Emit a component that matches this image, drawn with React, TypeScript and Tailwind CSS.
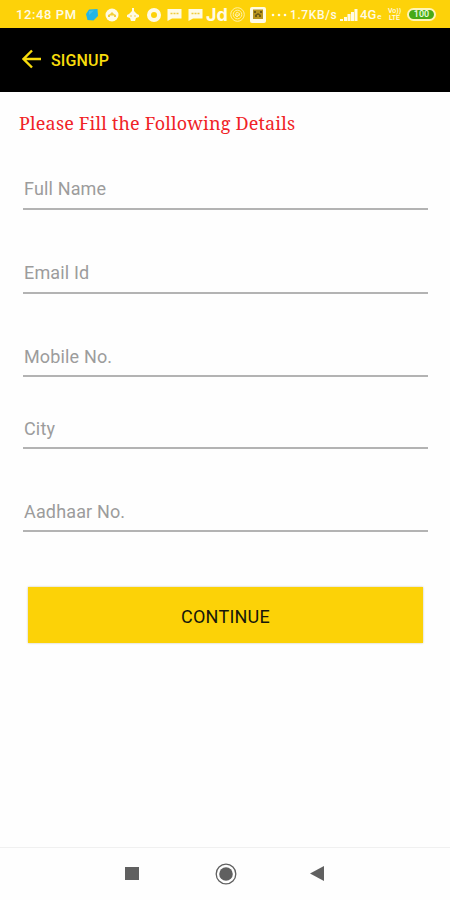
const fields = [
  { label: "Full Name", height: "h-[68px]", padding: "pb-px" },
  { label: "Email Id", height: "h-[84px]", padding: "pb-px" },
  { label: "Mobile No.", height: "h-[83px]", padding: "pt-px" },
  { label: "City", height: "h-[72px]", padding: "pt-px" },
  { label: "Aadhaar No.", height: "h-[83px]", padding: "pt-px" },
];

function ChatIcon() {
  return (
    <svg className="w-[15px] h-[13px] shrink-0" viewBox="0 0 15 13">
      <path d="M.5 1h14v9.500H5L.5 13z" fill="#fffbe5" />
      <path d="M3.500 5.500h8" stroke="#efcb3c" strokeWidth="1.4" strokeDasharray="2 1" />
    </svg>
  );
}

function StatusBar() {
  return (
    <div className="flex items-center h-7 pl-4 pt-px bg-[#fdd209] text-[#fffbe5] font-medium whitespace-nowrap">
      <span className="w-[69px] shrink-0 text-[13px] tracking-[0.6px]">12:48 PM</span>
      <svg className="w-[14px] h-[14px] shrink-0" viewBox="0 0 14 14">
        <path d="M4 1.500 12.500 1l.5 7-4.500 4.500-6-.5L1 6z" fill="#24b5e8" />
        <path d="M4 3 9 2.500 4 7z" fill="#42c2ec" />
      </svg>
      <svg className="w-[14px] h-[14px] ml-[6px] shrink-0" viewBox="0 0 14 14">
        <circle cx="7" cy="7" r="6.5" fill="#fffbe5" />
        <path d="M3 9V7l2-1 2-2 2 2 2 1v2z" fill="#f3cf3b" />
        <path d="M5 9V8l1-1 1 1 1-1 1 1v1z" fill="#fffbe5" />
      </svg>
      <svg className="w-[14px] h-[14px] ml-[7px] shrink-0" viewBox="0 0 14 14">
        <path d="M6 0h2v3l3 3 2 1v2l-3 1-1 3H5l-1-3-3-1V7l2-1 3-3z" fill="#fffbe5" />
        <path d="M4 8h2m2 0h2" stroke="#f5d34b" />
      </svg>
      <svg className="w-[14px] h-[14px] ml-[7px] shrink-0" viewBox="0 0 14 14">
        <circle cx="7" cy="7" r="5" fill="none" stroke="#fffbe5" strokeWidth="4" />
      </svg>
      <div className="flex ml-[6px] gap-[6px]">
        <ChatIcon />
        <ChatIcon />
      </div>
      <span className="w-[24px] ml-[3px] shrink-0 font-['Inter','Roboto',sans-serif] text-[18px] font-bold leading-none">Jd</span>
      <svg className="w-[15px] h-[15px] shrink-0" viewBox="0 0 15 15" fill="none" stroke="#fff0a6">
        <circle cx="7.5" cy="7.5" r="6.8" />
        <circle cx="7.5" cy="7.5" r="4.3" />
        <path d="M5 8l2-3 3 2-3 3zM6 8h4" />
      </svg>
      <svg className="w-[16px] h-[16px] ml-[5px] shrink-0" viewBox="0 0 16 16">
        <rect width="16" height="16" rx="2" fill="#fffbe5" />
        <rect x="3" y="2.500" width="10" height="9.500" fill="#b8941d" />
        <path d="M4 4h2v2H4zM10 4h2v2h-2zM5 8l3-2 3 2v2H9V8H7v2H5z" fill="#6d5a16" />
      </svg>
      <svg className="w-[16px] h-[4px] ml-[5px] shrink-0" viewBox="0 0 16 4" fill="#fffbe5">
        <circle cx="2" cy="2" r="1.300" />
        <circle cx="8" cy="2" r="1.300" />
        <circle cx="14" cy="2" r="1.300" />
      </svg>
      <span className="w-[50px] ml-[3px] shrink-0 text-[12px] tracking-[0.6px]">1.7KB/s</span>
      <svg className="w-[18px] h-[12px] shrink-0" viewBox="0 0 18 12" fill="#fffbe5">
        <path d="M0 10h3v2H0zM4 8h3v4H4zM7.500 5h3v7h-3zM11 3h3v9h-3zM14.500 0h3v12h-3z" />
      </svg>
      <span className="w-[27px] ml-[2px] shrink-0 text-[13px]">
        4G<span className="ml-px text-[8px]">e</span>
      </span>
      <span className="flex flex-col w-[15px] shrink-0 text-[7px] leading-[7px] text-center">
        <span className="h-[7px] overflow-hidden">Vo))</span>
        <span className="h-[7px] overflow-hidden">LTE</span>
      </span>
      <span className="flex items-center justify-center w-[29px] h-[13px] ml-[5px] shrink-0 rounded-full border-2 border-[#fff5b7] bg-[#48aa16] text-[9px] leading-none text-[#efffe0]">
        100
      </span>
    </div>
  );
}

export default function App() {
  return (
    <div className="flex flex-col w-[450px] h-[900px] overflow-hidden bg-[#fefefe] font-['Roboto','Noto_Sans',sans-serif]">
      <StatusBar />
      <header className="flex items-center h-16 pl-[22px] bg-black text-[#f8dc0c]">
        <svg className="w-5 h-5 mt-[-2px]" viewBox="0 0 20 20" fill="none" stroke="currentColor" strokeWidth="2.4">
          <path d="M19 10H2M10 1.500 1.500 10l8.500 8.500" />
        </svg>
        <h1 className="ml-[9px] pt-px text-[16px] font-medium tracking-[0.15px]">SIGNUP</h1>
      </header>

      <main className="flex flex-col flex-1">
        <h2 className="h-[50px] pt-[17px] pl-[19px] font-['Noto_Serif','DejaVu_Serif_Condensed','DejaVu_Serif',serif] text-[18px] leading-[28px] tracking-[0.17px] text-[#f02226] whitespace-nowrap">
          Please Fill the Following Details
        </h2>
        <form className="flex flex-col ml-[23px] mr-[22px]">
          {fields.map((field) => (
            <div key={field.label} className={`flex items-end ${field.height}`}>
              <input
                type="text"
                placeholder={field.label}
                className={`w-full h-10 px-px ${field.padding} border-b-2 border-[#b3b3b3] text-[18px] tracking-[0.15px] placeholder:text-[#9c9c9c] outline-none`}
              />
            </div>
          ))}
          <button
            type="button"
            className="h-[56px] mt-[55px] mx-[5px] pt-[2px] bg-[#fcd207] text-[18px] tracking-[0.25px] text-[#17170b] shadow-[0_0_2px_#c9c3a3]"
          >
            CONTINUE
          </button>
        </form>
      </main>

      <nav className="flex items-center h-[53px] pl-[125px] pb-px border-t border-[#f0f0f0]">
        <span className="w-[14px] h-[13px] bg-[#606060]" />
        <svg className="w-[22px] h-[22px] ml-[76px]" viewBox="0 0 22 22">
          <circle cx="11" cy="11" r="9.800" fill="none" stroke="#606060" strokeWidth="1.300" />
          <circle cx="11" cy="11" r="6.800" fill="#606060" />
        </svg>
        <svg className="w-[14px] h-[15px] ml-[73px]" viewBox="0 0 14 15">
          <path d="M14 0v15L0 7.500z" fill="#606060" />
        </svg>
      </nav>
    </div>
  );
}
